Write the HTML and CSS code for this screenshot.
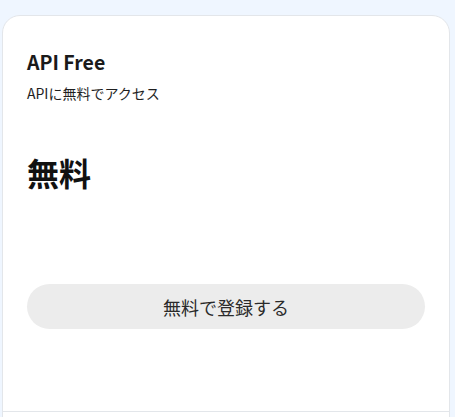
FILE: index.html
```html
<!DOCTYPE html>
<html lang="ja">
<head>
<meta charset="utf-8">
<title>API Free</title>
<link rel="stylesheet" href="styles.css">
</head>
<body>
<div class="page">
  <div class="card">
    <div class="card-body">
      <h2 class="plan-name">API Free</h2>
      <p class="plan-desc">APIに無料でアクセス</p>
      <div class="price">無料</div>
      <button class="signup" type="button">無料で登録する</button>
    </div>
    <div class="features"></div>
  </div>
</div>
</body>
</html>
```

FILE: styles.css
```css
* { box-sizing: border-box; }
html, body {
  margin: 0;
  padding: 0;
  background: #eff6ff;
  height: 100%;
  overflow: hidden;
}
body {
  font-family: "Noto Sans CJK JP", "Noto Sans", sans-serif;
  color: #1a1a1a;
}
.page {
  padding: 15px 5px 0 2px;
}
.card {
  background: #ffffff;
  border: 1px solid #e3e6ea;
  border-radius: 18px;
  min-height: 600px;
}
.card-body {
  padding: 32px 24px 82px;
  display: flex;
  flex-direction: column;
}
.plan-name {
  margin: 0;
  font-size: 19.5px;
  line-height: 28px;
  font-weight: 700;
  color: #1a1a1a;
}
.plan-desc {
  margin: 6px 0 0;
  font-size: 14px;
  line-height: 22px;
  color: #1f1f1f;
}
.price {
  margin-top: 48px;
  font-size: 32px;
  line-height: 40px;
  font-weight: 700;
  color: #111;
}
.signup {
  margin-top: 92px;
  height: 45px;
  width: 100%;
  border: none;
  border-radius: 23px;
  background: #ececec;
  font-family: inherit;
  font-size: 18px;
  color: #2a2a2a;
  cursor: pointer;
}
.features {
  border-top: 1px solid #e3e6ea;
}
```
